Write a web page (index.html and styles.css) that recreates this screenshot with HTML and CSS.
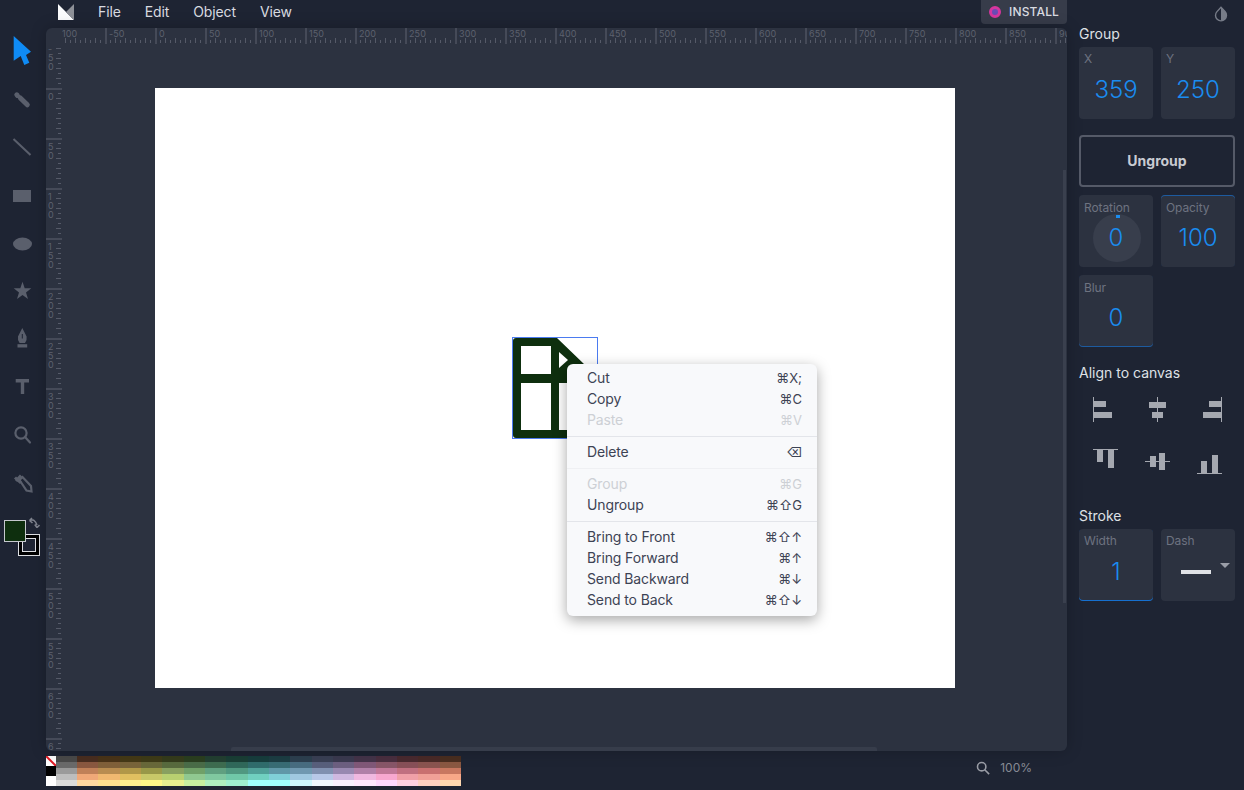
FILE: index.html
```html
<!DOCTYPE html>
<html>
<head>
<meta charset="utf-8">
<title>Method Draw</title>
<link rel="stylesheet" href="styles.css">
</head>
<body>
<div class="app">

<div class="tools">
  <svg class="tool" viewBox="0 0 32 32"><polygon class="active" points="7.7,1 25,16.7 20,20 23.3,27.7 18.3,30 14.7,21 7.7,25.7"/></svg>
  <svg class="tool" viewBox="0 0 32 32"><path class="line-thick" d="M10.800 11.800l.6.6M14.300 15l7 6.800"/></svg>
  <svg class="tool" viewBox="0 0 32 32"><path class="line-thin" d="M7.5 8l17 16"/></svg>
  <svg class="tool" viewBox="0 0 32 32"><rect x="7" y="11" width="18" height="12"/></svg>
  <svg class="tool" viewBox="0 0 32 32"><ellipse cx="16.5" cy="17" rx="9.5" ry="6.5"/></svg>
  <svg class="tool" viewBox="0 0 32 32"><polygon points="16.5,6.7 18.7,13.3 25.3,13.3 20,17.5 22,24 16.5,20 11,24 13,17.5 7.7,13.3 14.3,13.3"/></svg>
  <svg class="tool" viewBox="0 0 32 32"><path fill-rule="evenodd" d="M16.300 5l4.300 8.500q.7 3.500-1.600 6.500h-5.400q-2.300-3-1.600-6.500zM15.800 11v4.500h1V11z"/><rect x="11.500" y="21.200" width="9.700" height="3.300"/></svg>
  <svg class="tool" viewBox="0 0 32 32"><path d="M9.700 8H23v3.500h-4.800V23h-3.400V11.500H9.700z"/></svg>
  <svg class="tool" viewBox="0 0 32 32"><circle class="ring" cx="15" cy="14" r="5.6"/><path class="line-mid" d="M19 18l5 5.500"/></svg>
  <svg class="tool" viewBox="0 0 32 32"><path class="line-mid-3" d="M9 10.500l6 5.500M10 14l5-5.500"/><path class="ring" d="M13.500 13l3-3 8.500 9 .5 5.500-5-1z"/></svg>

  <div class="swatches">
    <div class="stroke-swatch"><div class="stroke-hole"></div></div>
    <div class="fill-swatch"></div>
    <svg class="swap" viewBox="0 0 12 12"><path d="M1.500 3.500q5-2.500 7.500 4.500M1.500 3.500L4 1M1.500 3.500L4.500 6M9 10.500L6.800 7.500M9 10.500l2.500-2.500"/></svg>
  </div>
</div>

<div class="topbar">
  <svg class="logo" viewBox="0 0 16 16"><polygon class="logo-a" points="0,0 16,16 0,16"/><polygon class="logo-b" points="16,0 16,16 8,8"/></svg>
  <nav class="menu-bar">
    <span>File</span>
    <span>Edit</span>
    <span>Object</span>
    <span>View</span>
  </nav>
  <div class="install"><span class="install-dot"></span>INSTALL</div>
</div>

<div class="workspace">
  <div class="ruler-top">
    <span class="mark mark-first">100</span>
    <span class="mark">-50</span>
    <span class="mark">0</span>
    <span class="mark">50</span>
    <span class="mark">100</span>
    <span class="mark">150</span>
    <span class="mark">200</span>
    <span class="mark">250</span>
    <span class="mark">300</span>
    <span class="mark">350</span>
    <span class="mark">400</span>
    <span class="mark">450</span>
    <span class="mark">500</span>
    <span class="mark">550</span>
    <span class="mark">600</span>
    <span class="mark">650</span>
    <span class="mark">700</span>
    <span class="mark">750</span>
    <span class="mark">800</span>
    <span class="mark">850</span>
    <span class="mark">900</span>
  </div>
  <div class="work-row">
    <div class="ruler-left">
      <span class="vmark vmark-first">-50</span>
      <span class="vmark">0</span>
      <span class="vmark">50</span>
      <span class="vmark">100</span>
      <span class="vmark">150</span>
      <span class="vmark">200</span>
      <span class="vmark">250</span>
      <span class="vmark">300</span>
      <span class="vmark">350</span>
      <span class="vmark">400</span>
      <span class="vmark">450</span>
      <span class="vmark">500</span>
      <span class="vmark">550</span>
      <span class="vmark">600</span>
      <span class="vmark">650</span>
    </div>
    <div class="stage">
      <div class="canvas">
        <svg class="shape" viewBox="0 0 90 105">
          <path class="shape-body" fill-rule="evenodd" d="M1 4q0-3 3-3h41l27 26v74H4q-3 0-3-3zM9 9v28h30V9zM9 46v47h30V46zM47 15v16l9-8zM47 46v47h28V46z"/>
          <rect class="shape-box" x="0.500" y="0.500" width="85" height="101"/>
        </svg>
      </div>
    </div>
  </div>
  <div class="scroll-v"></div>
  <div class="scroll-h"></div>
</div>

<div class="bottom">
  <div class="palette">
    <div class="pal-special">
      <svg class="pal-none" viewBox="0 0 10 10"><rect width="10" height="10" fill="#fff"/><path d="M0 0l10 10" stroke="#e01b24" stroke-width="2"/></svg>
      <div class="pal-black"></div>
      <div class="pal-white"></div>
    </div>
    <div class="pal-grid" id="palette"></div>
  </div>
  <div class="zoom">
    <svg class="zoom-icon" viewBox="0 0 16 16"><circle cx="6.500" cy="6.500" r="4.800"/><path d="M10 10l5 5"/></svg>
    <span>100%</span>
  </div>
</div>

<div class="panel">
  <svg class="theme" viewBox="0 0 14 16"><path class="theme-line" d="M7 1.200L3 5.600a5.500 5.500 0 1 0 8 0z"/><path class="theme-fill" d="M7 1.200v13.600a5.500 5.500 0 0 0 4-9.200z"/></svg>
  <div class="panel-title">Group</div>
  <div class="fields">
    <div class="field"><span class="field-label">X</span><span class="field-value">359</span></div>
    <div class="field"><span class="field-label">Y</span><span class="field-value">250</span></div>
  </div>
  <button class="ungroup">Ungroup</button>
  <div class="fields fields-wrap">
    <div class="field">
      <div class="dial"></div><div class="dial-dot"></div>
      <span class="field-label">Rotation</span><span class="field-value">0</span>
    </div>
    <div class="field field-top"><span class="field-label">Opacity</span><span class="field-value">100</span></div>
    <div class="field field-bottom"><span class="field-label">Blur</span><span class="field-value">0</span></div>
  </div>
  <div class="panel-title title-align">Align to canvas</div>
  <div class="aligns">
    <svg viewBox="0 0 25 25"><path d="M0 0h1v25H0zM1 4h12v6H1zM1 15h18v6H1z"/></svg>
    <svg viewBox="0 0 25 25"><path d="M12 0h1v25h-1zM4 5h17v6H4zM7 15h11v6H7z"/></svg>
    <svg viewBox="0 0 25 25"><path d="M24 0h1v25h-1zM12 4h12v6H12zM6 15h18v6H6z"/></svg>
    <svg viewBox="0 0 25 25"><path d="M0 0h25v1H0zM4 1h6v12H4zM15 1h6v18h-6z"/></svg>
    <svg viewBox="0 0 25 25"><path d="M0 12h25v1H0zM5 7h6v11H5zM14 4h6v17h-6z"/></svg>
    <svg viewBox="0 0 25 25"><path d="M0 24h25v1H0zM4 12h6v12H4zM15 6h6v18h-6z"/></svg>
  </div>
  <div class="panel-title title-stroke">Stroke</div>
  <div class="fields">
    <div class="field field-bottom-strong"><span class="field-label">Width</span><span class="field-value">1</span></div>
    <div class="field">
      <span class="field-label">Dash</span>
      <div class="dash-line"></div>
      <div class="dash-caret"></div>
    </div>
  </div>
</div>

</div>

<div class="context-menu">
  <div class="item"><span>Cut</span><span class="keys">⌘X;</span></div>
  <div class="item"><span>Copy</span><span class="keys">⌘C</span></div>
  <div class="item off"><span>Paste</span><span class="keys">⌘V</span></div>
  <div class="sep"></div>
  <div class="item"><span>Delete</span><span class="keys">⌫</span></div>
  <div class="sep sep-light"></div>
  <div class="item off"><span>Group</span><span class="keys">⌘G</span></div>
  <div class="item"><span>Ungroup</span><span class="keys">⌘⇧G</span></div>
  <div class="sep"></div>
  <div class="item"><span>Bring to Front</span><span class="keys">⌘⇧↑</span></div>
  <div class="item"><span>Bring Forward</span><span class="keys">⌘↑</span></div>
  <div class="item"><span>Send Backward</span><span class="keys">⌘↓</span></div>
  <div class="item"><span>Send to Back</span><span class="keys">⌘⇧↓</span></div>
</div>

<script src="palette.js"></script>
</body>
</html>
```

FILE: styles.css
```css
html, body {
   margin: 0;
   height: 100%;
   overflow: hidden;
   background: #1e2433;
   font-family: Inter, "Liberation Sans", sans-serif;
}

.app {
   display: grid;
   grid-template-columns: 46px 1021px 177px;
   grid-template-rows: 28px 723px 39px;
   width: 1244px;
   height: 790px;
}

/* left tools */
.tools {
   grid-column: 1;
   grid-row: 1 / 4;
   display: flex;
   flex-direction: column;
   align-items: center;
   width: 44px;
   padding-top: 27px;
}

.tool {
   display: block;
   flex: none;
   width: 32px;
   height: 32px;
   padding: 8px 0;
   fill: #5a5f6c;
}

.tool .active {
   fill: #0f8bf5;
}

.line-thick, .line-thin, .line-mid, .line-mid-3, .ring {
   fill: none;
   stroke: #5a5f6c;
}

.line-thick {
   stroke-width: 5;
   stroke-linecap: round;
}

.line-thin {
   stroke-width: 2;
}

.line-mid {
   stroke-width: 2.2;
   stroke-linecap: round;
}

.line-mid-3 {
   stroke-width: 3;
}

.ring {
   stroke-width: 2.2;
}

.swatches {
   position: relative;
   flex: none;
   width: 44px;
   height: 40px;
   margin-top: 13px;
}

.fill-swatch {
   position: absolute;
   left: 4px;
   top: 0;
   box-sizing: border-box;
   width: 22px;
   height: 22px;
   background: #0e2f0e;
   border: 1px solid #c6c9ce;
}

.stroke-swatch {
   position: absolute;
   left: 18px;
   top: 14px;
   box-sizing: border-box;
   width: 22px;
   height: 22px;
   padding: 3px;
   background: #000;
   border: 1px solid #dfe1e5;
}

.stroke-hole {
   box-sizing: border-box;
   width: 14px;
   height: 14px;
   background: #1e2433;
   border: 1px solid #dfe1e5;
}

.swap {
   position: absolute;
   left: 28px;
   top: -3px;
   width: 12px;
   height: 12px;
   fill: none;
   stroke: #7e828d;
   stroke-width: 1.6;
}

/* top bar */
.topbar {
   grid-column: 2;
   grid-row: 1;
   display: flex;
   align-items: flex-start;
   padding-left: 12px;
}

.logo {
   width: 16px;
   height: 16px;
   margin-top: 4px;
}

.logo-a {
   fill: #fbfcfd;
}

.logo-b {
   fill: #8d9097;
}

.menu-bar {
   display: flex;
   gap: 24px;
   margin-left: 24px;
   font-size: 14px;
   line-height: 24px;
   letter-spacing: -0.12px;
   color: #d9dbe0;
}

.install {
   display: flex;
   align-items: center;
   gap: 8px;
   box-sizing: border-box;
   width: 86px;
   height: 24px;
   margin-left: auto;
   padding: 0 0 1px 8px;
   border-radius: 0 0 4px 4px;
   background: #373c4a;
   font-size: 12px;
   font-weight: 500;
   letter-spacing: 0.15px;
   color: #d9dbe0;
}

.install-dot {
   box-sizing: border-box;
   width: 12px;
   height: 12px;
   border-radius: 50%;
   background: #6a4bb5;
   border: 3px solid #d6369e;
}

/* workspace and rulers */
.workspace {
   grid-column: 2;
   grid-row: 2;
   position: relative;
   display: flex;
   flex-direction: column;
   overflow: hidden;
   border-radius: 6px;
   background: #2c3240;
   box-shadow: 0 0 16px rgba(0, 0, 0, 0.22);
}

.ruler-top {
   display: flex;
   flex: none;
   height: 16px;
   margin-left: 16px;
   overflow: hidden;
   background-image:
      linear-gradient(90deg, #555a68 1px, transparent 1px),
      linear-gradient(90deg, #555a68 1px, transparent 1px);
   background-size: 5px 3px, 10px 5px;
   background-position: 3px 12px, 3px 10px;
   background-repeat: repeat-x;
}

.mark {
   flex: 0 0 50px;
   box-sizing: border-box;
   border-left: 2px solid #454a58;
   padding-left: 2px;
   font-size: 9px;
   line-height: 11px;
   letter-spacing: 0.1px;
   color: #5c616e;
}

.mark-first {
   flex-basis: 43px;
   border-left: none;
   padding-left: 0;
}

.work-row {
   display: flex;
   flex: 1;
   min-height: 0;
}

.ruler-left {
   flex: none;
   width: 16px;
   overflow: hidden;
   background-image:
      linear-gradient(#555a68 1px, transparent 1px),
      linear-gradient(#555a68 1px, transparent 1px);
   background-size: 3px 5px, 5px 10px;
   background-position: 12px 4px, 10px 4px;
   background-repeat: repeat-y;
}

.vmark {
   display: block;
   box-sizing: border-box;
   width: 16px;
   height: 50px;
   padding: 2px 9px 0 2px;
   border-top: 2px solid #454a58;
   font-size: 9px;
   line-height: 9px;
   word-break: break-all;
   color: #5c616e;
}

.vmark-first {
   height: 44px;
   padding-top: 0;
   border-top: none;
}

.stage {
   flex: 1;
   padding: 44px 0 0 93px;
}

.canvas {
   position: relative;
   width: 800px;
   height: 600px;
   background: #fff;
}

.shape {
   position: absolute;
   left: 357px;
   top: 249px;
   width: 90px;
   height: 105px;
}

.shape-body {
   fill: #0e2f0e;
}

.shape-box {
   fill: none;
   stroke: #4b7bf0;
   stroke-width: 1;
}

.scroll-v {
   position: absolute;
   right: 1px;
   top: 142px;
   width: 3px;
   height: 433px;
   background: #3a404e;
}

.scroll-h {
   position: absolute;
   left: 185px;
   bottom: 0;
   width: 646px;
   height: 4px;
   background: #373d4b;
   border-radius: 2px 2px 0 0;
}

/* bottom */
.bottom {
   grid-column: 2;
   grid-row: 3;
   display: flex;
   justify-content: space-between;
   align-items: flex-start;
   padding: 5px 35px 0 0;
}

.palette {
   display: flex;
   height: 30px;
}

.pal-special {
   width: 10px;
}

.pal-none {
   display: block;
   width: 10px;
   height: 10px;
}

.pal-black {
   height: 10px;
   background: #000;
}

.pal-white {
   height: 10px;
   background: #fff;
}

.pal-grid {
   display: grid;
   grid-template-columns: 21px repeat(18, 21.33px);
   grid-template-rows: repeat(5, 6px);
   grid-auto-flow: column;
}

.zoom {
   display: flex;
   align-items: center;
   gap: 10px;
   height: 16px;
   margin-top: 4px;
   font-size: 12px;
   line-height: 16px;
   color: #878b95;
}

.zoom-icon {
   width: 14px;
   height: 16px;
   fill: none;
   stroke: #9a9da6;
   stroke-width: 1.8;
}

/* right panel */
.panel {
   grid-column: 3;
   grid-row: 1 / 4;
   position: relative;
   padding: 25px 9px 0 12px;
}

.theme {
   position: absolute;
   left: 147px;
   top: 6px;
   width: 14px;
   height: 16px;
}

.theme-line {
   fill: none;
   stroke: #777c88;
   stroke-width: 1.4;
}

.theme-fill {
   fill: #777c88;
}

.panel-title {
   font-size: 14px;
   line-height: 18px;
   color: #dfe1e6;
}

.title-align {
   margin-top: 17px;
}

.title-stroke {
   margin-top: 33px;
}

.fields {
   display: grid;
   grid-template-columns: 74px 74px;
   gap: 8px;
   margin-top: 4px;
}

.fields-wrap {
   margin-top: 8px;
}

.field {
   position: relative;
   display: flex;
   flex-direction: column;
   box-sizing: border-box;
   height: 72px;
   padding: 5px;
   border-radius: 4px;
   background: #2c3240;
}

.fields-wrap .field {
   padding-top: 6px;
}

.field-top {
   box-shadow: inset 0 1px 0 #1d5ba0;
}

.field-bottom {
   box-shadow: inset 0 -1px 0 #1d5ba0;
}

.field-bottom-strong {
   box-shadow: inset 0 -1px 0 #1670d0;
}

.field-label {
   position: relative;
   font-size: 12px;
   line-height: 14px;
   letter-spacing: -0.1px;
   color: #6e7380;
}

.field-value {
   position: relative;
   margin-top: 9px;
   font-size: 24px;
   font-weight: 300;
   line-height: 30px;
   text-align: center;
   color: #1a8cf0;
}

.fields-wrap .field-value {
   margin-top: 8px;
}

.dial {
   position: absolute;
   left: 14px;
   top: 19px;
   width: 48px;
   height: 48px;
   border-radius: 50%;
   background: #383e4c;
}

.dial-dot {
   position: absolute;
   left: 37px;
   top: 20px;
   width: 4px;
   height: 3px;
   background: #1a8cf0;
}

.ungroup {
   display: block;
   box-sizing: border-box;
   width: 156px;
   height: 52px;
   margin-top: 16px;
   padding: 0 0 2px;
   border: 2px solid #555a68;
   border-radius: 4px;
   background: transparent;
   font-family: inherit;
   font-size: 14px;
   font-weight: 700;
   color: #c8cbd2;
}

.aligns {
   display: grid;
   grid-template-columns: repeat(3, 52px);
   grid-auto-rows: 25px;
   row-gap: 27px;
   justify-items: center;
   margin-top: 15px;
}

.aligns svg {
   width: 25px;
   height: 25px;
   fill: #a5a8b0;
}

.dash-line {
   position: absolute;
   left: 20px;
   top: 41px;
   width: 30px;
   height: 4px;
   background: #e0e2e6;
}

.dash-caret {
   position: absolute;
   left: 59px;
   top: 34px;
   width: 0;
   height: 0;
   border-left: 5px solid transparent;
   border-right: 5px solid transparent;
   border-top: 5px solid #9a9ea8;
}

/* context menu */
.context-menu {
   position: absolute;
   left: 567px;
   top: 364px;
   box-sizing: border-box;
   width: 250px;
   height: 252px;
   padding: 3px 0 6px;
   border-radius: 6px;
   background: #f8f9fb;
   box-shadow: 0 4px 14px rgba(0, 0, 0, 0.35);
   font-size: 14px;
   letter-spacing: -0.13px;
   color: #3d4354;
}

.item {
   display: flex;
   justify-content: space-between;
   align-items: center;
   height: 21px;
   padding: 0 15px 0 20px;
}

.keys {
   font-family: Inter, "DejaVu Sans", sans-serif;
   font-size: 13px;
   letter-spacing: 0;
}

.off {
   color: #cdd0d5;
}

.sep {
   height: 1px;
   margin: 6px 0 4px;
   background: #e3e5ea;
}

.sep-light {
   background: #eff0f3;
}
```

FILE: palette.js
```js
// colour swatches along the bottom, one array per shade, dark to light
var grid = document.getElementById('palette');
var greys = ['#4a4a4a', '#6a6a6a', '#9a9a9a', '#bdbdbd', '#dcdcdc'];
var rows = [
   ['4a2e20', '4a3418', '453a16', '3f3c18', '353c1c', '2b3f20', '234032', '1a3f36', '173e3e', '1c3e44', '2d4050', '3a4055', '3b3a50', '44344a', '4a2f40', '4a2a30', '4a2a28', '4a2e20'],
   ['8a5840', '80603a', '78643a', '68683a', '586a3e', '4a6c48', '3e6c50', '30685a', '306c6c', '386c74', '486c80', '585f7c', '6c5f80', '805878', '885668', '885058', '8a5450', '8a5842'],
   ['c08058', 'b88c50', 'b09848', '989848', '88a060', '70a068', '60a080', '509880', '50a098', '6098a8', '7098b0', '8090b0', '9888b0', 'b080a8', 'c07898', 'c07080', 'c87070', 'c87860'],
   ['f0a878', 'f0b870', 'e0c060', 'c8c868', 'b8d070', '90c890', '80c8a0', '70c8a8', '70d0c0', '80d0d8', 'a0c8e0', 'b8c8e8', 'd0b8e0', 'f0b8e0', 'f8a8d0', 'f0a0a8', 'f0a098', 'f8a888'],
   ['ffd8a0', 'ffe090', 'fff090', 'fff888', 'e8f090', 'c8f0a0', 'b0f0c0', 'a0f0d0', 'a0ffff', 'a0ffff', 'd0f8ff', 'f0f8ff', 'f8f0ff', 'ffe8ff', 'ffd8ff', 'ffd0e0', 'ffd0c0', 'ffd8b0']
];

function addCell(colour) {
   var cell = document.createElement('div');
   cell.style.background = colour;
   grid.appendChild(cell);
}

greys.forEach(addCell);
rows[0].forEach(function (_, col) {
   rows.forEach(function (row) {
      addCell('#' + row[col]);
   });
});
```
